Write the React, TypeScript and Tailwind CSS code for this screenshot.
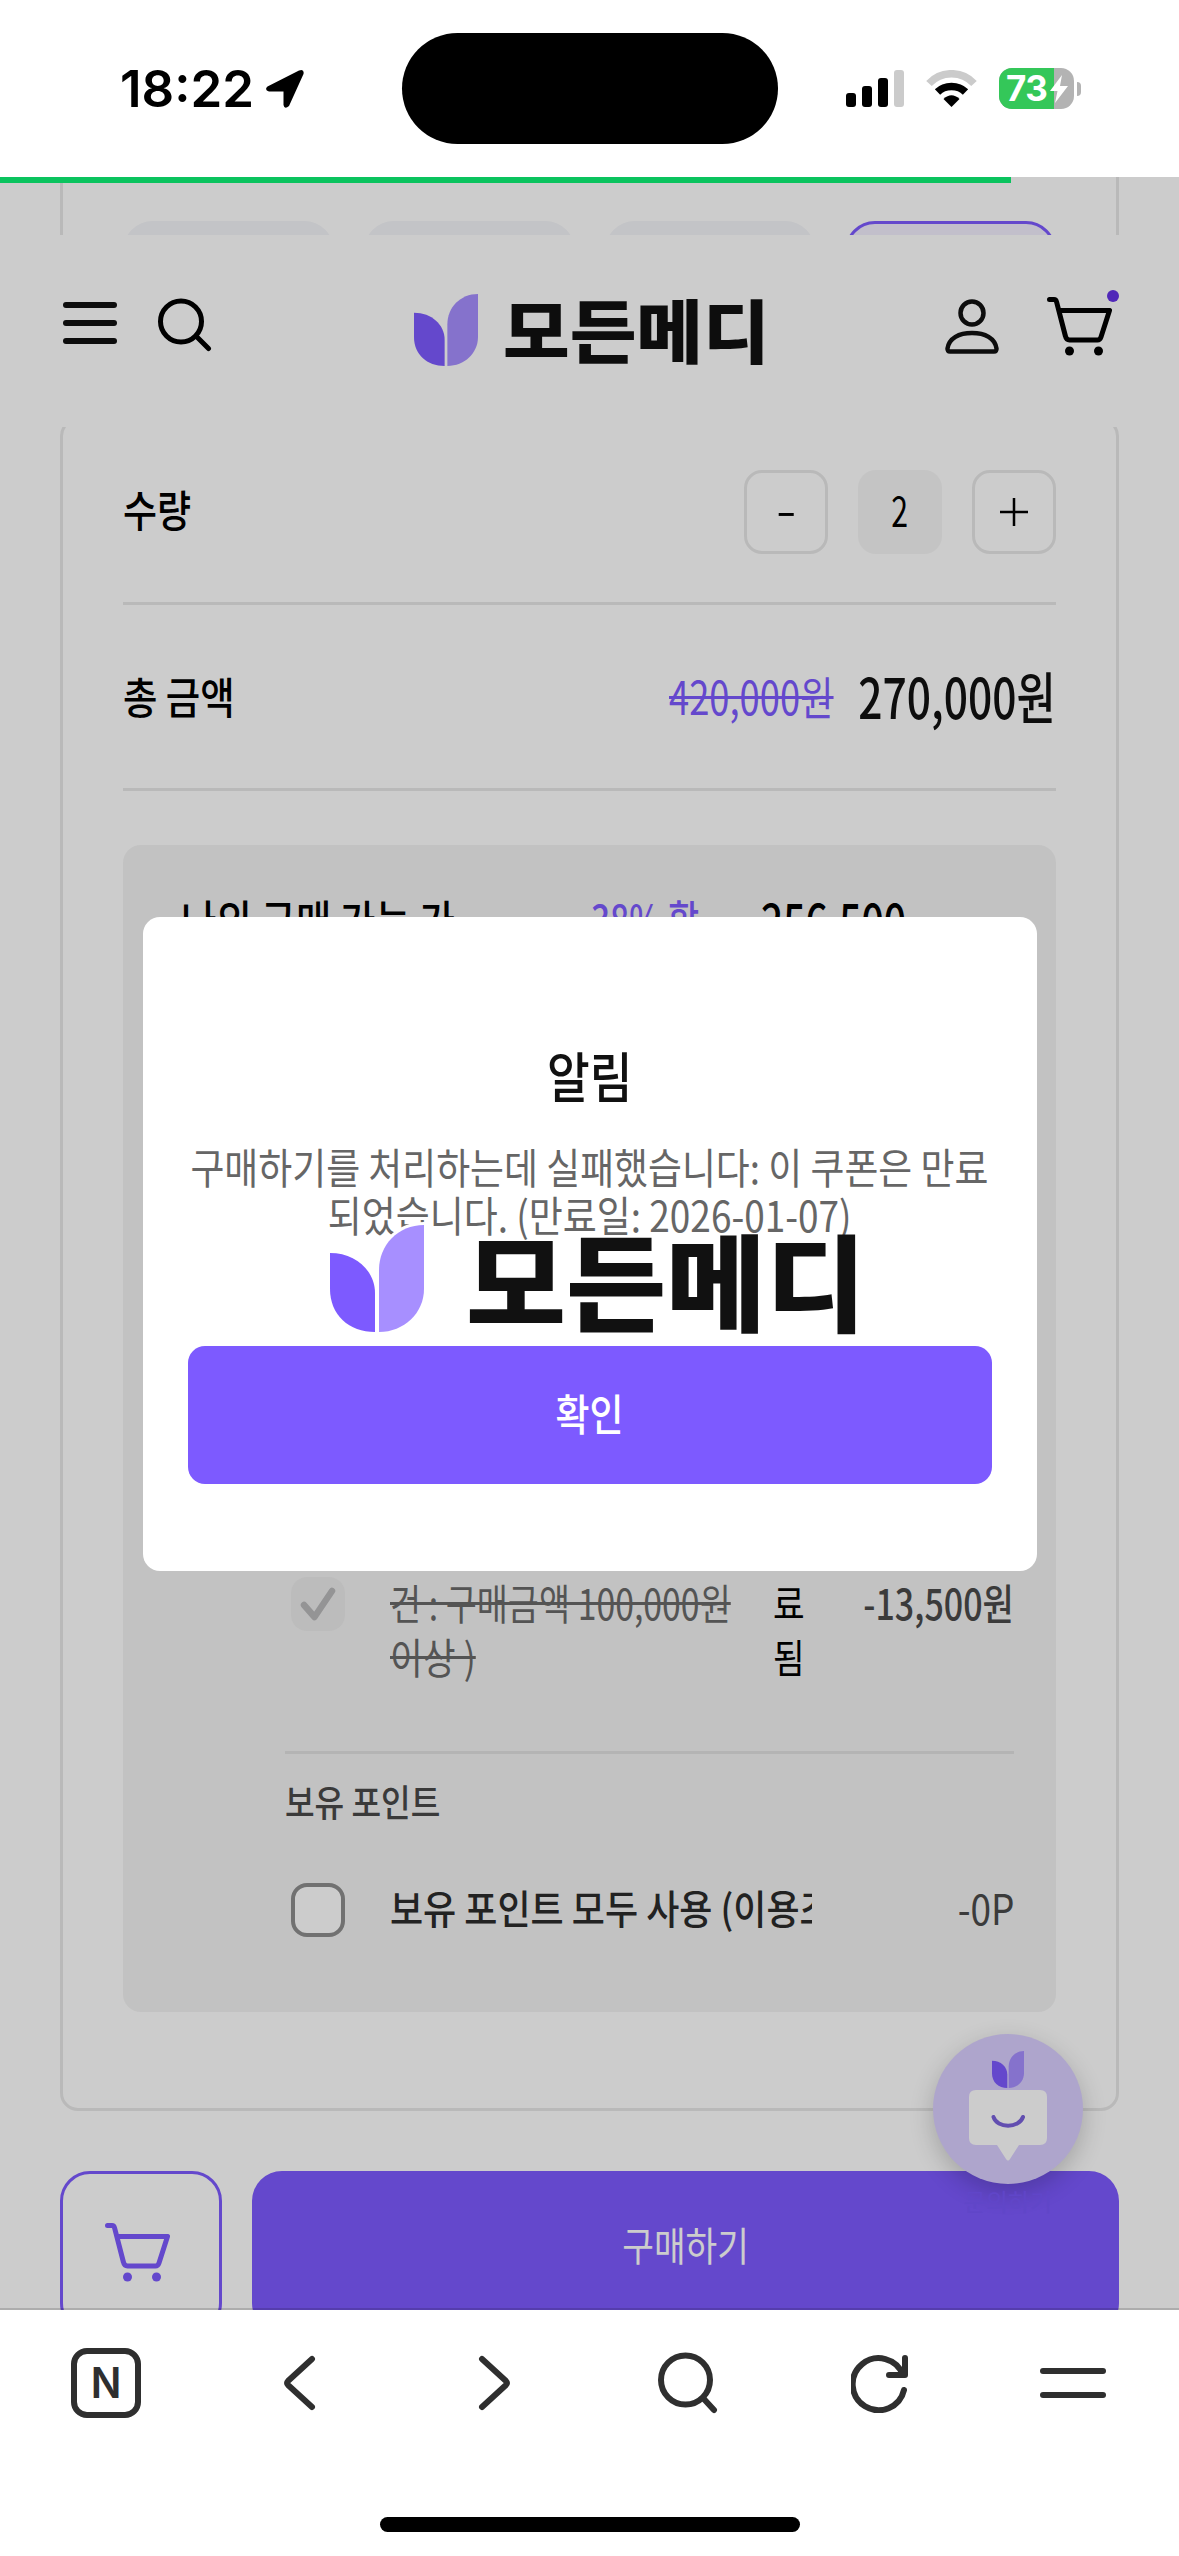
import type { ReactNode } from 'react'
import clsx from 'clsx'

const FONT = 'font-["Noto_Sans_CJK_KR","Noto_Sans",sans-serif]'

/**
 * 가로 폭을 좁힌 한 줄 텍스트
 */
function Condensed({ className, children }: { className?: string; children: ReactNode }) {
  return <span className={clsx('inline-block align-top whitespace-nowrap', className)}>{children}</span>
}

/**
 * 새싹 모양 심볼
 */
function Leaf({ className, outlined = false }: { className?: string; outlined?: boolean }) {
  return (
    <svg viewBox="0 0 94 107" className={clsx('overflow-visible', className)} preserveAspectRatio="none">
      {outlined && (
        <path d="M49 107V45C49 20 68 0 94 0V64C94 88 74 107 49 107Z" fill="none" stroke="#fff" strokeWidth="6" />
      )}
      <path d="M0 28C26 28 45 46 45 68V107C19 107 0 90 0 64Z" fill="#7d5aff" />
      <path d="M49 107V45C49 20 68 0 94 0V64C94 88 74 107 49 107Z" fill="#a78fff" />
    </svg>
  )
}

function CartIcon({ className }: { className?: string }) {
  return (
    <svg
      viewBox="0 0 66 60"
      className={className}
      fill="none"
      stroke="currentColor"
      strokeWidth="5"
      strokeLinecap="round"
      strokeLinejoin="round"
    >
      <path d="M2.5 3.5H7Q9 3.5 9.6 6L18.4 40Q19.3 44 22.5 44H50.5Q53 44 54 41L62.5 14.5H12.5" />
      <circle cx="22.5" cy="55" r="4.5" fill="currentColor" stroke="none" />
      <circle cx="51.5" cy="55" r="4.5" fill="currentColor" stroke="none" />
    </svg>
  )
}

/**
 * 아이폰 상태바
 */
function StatusBar() {
  return (
    <div className="relative flex h-[177px] shrink-0 items-center bg-white">
      <span className="ml-[120px] w-[145px] font-[Inter] text-[51px] leading-none font-semibold text-black">
        18:22
      </span>
      <svg viewBox="0 0 40 40" className="size-10">
        <path
          d="M2.5 17.5L34 1.5Q39.500 -0.500 38.500 5L24 37Q19.500 41 18.500 36V22.500H4Q-1 21 2.500 17.500Z"
          fill="#000"
        />
      </svg>
      <div className="absolute top-[33px] left-[402px] h-[111px] w-[376px] rounded-full bg-black" />
      <div className="ml-auto flex items-center pr-[98px]">
        <div className="mr-[22px] flex h-[37px] items-end gap-[6px]">
          <div className="h-[14px] w-[10px] rounded-[3px] bg-black" />
          <div className="h-[21px] w-[10px] rounded-[3px] bg-black" />
          <div className="h-[29px] w-[10px] rounded-[3px] bg-black" />
          <div className="h-[37px] w-[10px] rounded-[3px] bg-[#cbcbcb]" />
        </div>
        <svg viewBox="0 0 51 37" className="mr-[22px] h-[37px] w-[51px]" fill="none" strokeWidth="7.500">
          <path d="M3 13.500Q12 3.700 25.500 3.700T48 13.500" stroke="#cbcbcb" />
          <path d="M11.500 22Q17 16.500 25.500 16.500T39.500 22" stroke="#000" />
          <path d="M17.500 29Q25.500 21.500 33.500 29L25.500 37Z" fill="#000" />
        </svg>
        <div className="relative flex h-[41px] w-[75px] items-center overflow-hidden rounded-[13px] bg-[#b3b3b3]">
          <div className="absolute inset-y-0 left-0 w-[55px] bg-[#34c759]" />
          <span className="relative ml-[7px] w-[44px] font-[Inter] text-[35px] leading-none font-bold tracking-[-0.5px] text-white">
            73
          </span>
          <svg viewBox="0 0 18 28" className="relative h-[28px] w-[18px]">
            <path d="M12 0L0 16H7.500L5 28L18 11H10Z" fill="#fff" />
          </svg>
        </div>
        <div className="ml-[3px] h-[14px] w-[4px] rounded-r-full bg-[#b3b3b3]" />
      </div>
    </div>
  )
}

/**
 * 상단 헤더
 */
function Header() {
  return (
    <header className="flex h-[192px] shrink-0 items-start bg-white px-[60px]">
      <div className="ml-[3px] flex pt-[63px]">
        <div className="mt-[4px] flex w-[54px] flex-col gap-[12px]">
          <div className="h-[6px] rounded-sm bg-[#111]" />
          <div className="h-[6px] rounded-sm bg-[#111]" />
          <div className="h-[6px] rounded-sm bg-[#111]" />
        </div>
        <svg
          viewBox="0 0 54 54"
          className="ml-[41px] size-[54px]"
          fill="none"
          stroke="#000"
          strokeWidth="5"
          strokeLinecap="round"
        >
          <ellipse cx="23" cy="23.500" rx="20.500" ry="20.500" />
          <path d="M38 38L50.500 50.500" />
        </svg>
      </div>
      <div className="ml-[202px] flex pt-[59px]">
        <Leaf className="h-[72px] w-[64px]" />
        <span className="-mt-[4px] ml-[25px] w-[262px] origin-left scale-x-[1.05] text-[69px] leading-[76px] font-black whitespace-nowrap text-[#111]">
          모든메디
        </span>
      </div>
      <div className="ml-auto flex pt-[61px]">
        <svg
          viewBox="0 0 54 56"
          className="mt-[3px] h-[56px] w-[54px]"
          fill="none"
          stroke="#111"
          strokeWidth="4.500"
          strokeLinejoin="round"
        >
          <circle cx="27" cy="14" r="11.500" />
          <path d="M5 52.500Q2.300 52.500 2.500 49.500C4 39 14 34 27 34S50 39 51.500 49.500Q51.700 52.500 49 52.500Z" />
        </svg>
        <div className="relative ml-[48px] pr-[6px]">
          <CartIcon className="h-[60px] w-[66px]" />
          <div className="absolute -top-[6px] right-0 size-[12px] rounded-full bg-[#6533e7]" />
        </div>
      </div>
    </header>
  )
}

/**
 * 수량 선택
 */
function Quantity() {
  return (
    <div className="flex h-[181px] items-center justify-between">
      <Condensed className="origin-left scale-x-[0.86] pb-[6px] text-[43px] font-medium">수량</Condensed>
      <div className="flex gap-[30px] text-[42px]">
        <button className="flex size-[84px] items-center justify-center rounded-[18px] border-[3px] border-[#e8e8e8] pb-[8px]">
          <Condensed className="scale-x-[1.4]">-</Condensed>
        </button>
        <div className="flex size-[84px] items-center justify-center rounded-[18px] bg-[#f6f6f6] pb-[7px]">
          <Condensed className="scale-x-[0.72]">2</Condensed>
        </div>
        <button className="flex size-[84px] items-center justify-center rounded-[18px] border-[3px] border-[#e8e8e8]">
          <svg viewBox="0 0 28 28" className="size-7" stroke="#000" strokeWidth="2.500">
            <path d="M14 0V28M0 14H28" />
          </svg>
        </button>
      </div>
    </div>
  )
}

function TotalPrice() {
  return (
    <div className="flex h-[189px] items-center border-y-[3px] border-[#e8e8e8] pb-[3px]">
      <Condensed className="origin-left scale-x-[0.87] text-[43px] font-medium">총 금액</Condensed>
      <div className="ml-auto flex w-[387px] items-center">
        <div className="w-[187px]">
          <Condensed className="origin-left scale-x-[0.79] text-[46px] text-[#7d5aff] line-through decoration-3">
            420,000원
          </Condensed>
        </div>
        <div className="flex w-[200px] justify-end">
          <Condensed className="origin-right scale-x-[0.76] text-[56px] font-medium text-[#111]">270,000원</Condensed>
        </div>
      </div>
    </div>
  )
}

/**
 * 쿠폰 / 포인트 할인 패널
 */
function DiscountPanel() {
  return (
    <div className="mt-[54px] h-[1167px] rounded-[18px] bg-[#f3f3f3] pr-[42px] pl-[162px]">
      <div className="-ml-[104px] flex h-[732px] items-start pt-[43px]">
        <div className="w-[410px]">
          <Condensed className="origin-left scale-x-[0.895] text-[43px] leading-[60px] font-medium">
            나의 구매 가능 가
          </Condensed>
        </div>
        <div className="w-[170px]">
          <Condensed className="origin-left scale-x-[0.78] text-[43px] leading-[60px] font-medium text-[#7d5aff]">
            38% 할
          </Condensed>
        </div>
        <Condensed className="origin-left scale-x-[0.78] text-[50px] leading-[60px] font-medium">256,500</Condensed>
      </div>

      {/* 만료된 쿠폰 */}
      <div className="flex h-[174px] text-[42px] leading-[54px]">
        <div className="ml-[6px] flex size-[54px] items-center justify-center rounded-[16px] bg-[#ececec]">
          <svg
            viewBox="0 0 36 34"
            className="h-[34px] w-[36px]"
            fill="none"
            stroke="#b9b9bb"
            strokeWidth="6.500"
            strokeLinecap="round"
            strokeLinejoin="round"
          >
            <path d="M4 18L14.500 30L32 4" />
          </svg>
        </div>
        <div className="-mt-[2px] ml-[45px] flex w-[383px] flex-col items-start text-[#6a6a6a]">
          <Condensed className="origin-left scale-x-[0.805] line-through decoration-3">
            건 : 구매금액 100,000원
          </Condensed>
          <Condensed className="origin-left scale-x-[0.85] line-through decoration-3">이상 )</Condensed>
        </div>
        <div className="-mt-[2px] flex w-[34px] flex-col text-[40px]">
          <Condensed className="origin-left scale-x-[0.86]">료</Condensed>
          <Condensed className="origin-left scale-x-[0.86]">됨</Condensed>
        </div>
        <div className="-mt-[2px] flex flex-1 justify-end text-[#4a4a4a]">
          <Condensed className="origin-right scale-x-[0.81] font-medium">-13,500원</Condensed>
        </div>
      </div>

      <div className="border-t-[3px] border-[#e2e2e2] pt-[20px] leading-[54px]">
        <Condensed className="origin-left scale-x-[0.87] text-[37px] font-medium text-[#494949]">보유 포인트</Condensed>
      </div>
      <div className="mt-[55px] flex h-[54px] leading-[54px]">
        <div className="ml-[6px] size-[54px] rounded-[16px] border-[4px] border-[#8e8e8e] bg-white" />
        <div className="-mt-[3px] ml-[45px] w-[422px] overflow-hidden">
          <Condensed className="origin-left scale-x-[0.9] text-[40px] font-medium text-[#2b2b2b]">
            보유 포인트 모두 사용 (이용조
          </Condensed>
        </div>
        <div className="-mt-[3px] flex flex-1 justify-end">
          <Condensed className="origin-right scale-x-[0.88] text-[42px] text-[#4a4a4a]">-0P</Condensed>
        </div>
      </div>
    </div>
  )
}

/**
 * 채팅 상담 버튼
 */
function ChatButton() {
  return (
    <div className="absolute top-[1857px] left-[933px] flex w-[150px] flex-col items-center">
      <div className="flex size-[150px] flex-col items-center rounded-full bg-[#dacfff] pt-[17px] shadow-[0_8px_24px_rgba(0,0,0,0.2)]">
        <Leaf className="h-[37px] w-[32px]" />
        <svg viewBox="0 0 78 72" className="mt-[2px] h-[72px] w-[78px]">
          <path
            d="M7 0H71Q78 0 78 7V48Q78 55 71 55H50L41 69Q39 72 37 69L28 55H7Q0 55 0 48V7Q0 0 7 0Z"
            fill="#fff"
          />
          <path d="M24.500 27C28 38.500 50 38.500 54 27" fill="none" stroke="#7b62dc" strokeWidth="4" strokeLinecap="round" />
        </svg>
      </div>
      <span className="mt-[1px] text-[24px] leading-[32px] whitespace-nowrap text-[#7958fa]">문의하기</span>
    </div>
  )
}

/**
 * 알림 모달
 */
function AlertModal() {
  return (
    <div className="absolute inset-0 flex items-center justify-center bg-black/20">
      <div className="flex h-[654px] w-[894px] flex-col items-center rounded-[17px] bg-white px-[45px] pt-[118px]">
        <Condensed className="scale-x-[0.86] text-[54px] leading-[80px] font-medium text-[#111]">알림</Condensed>
        <div className="mt-[27px] flex flex-col items-center text-[42px] leading-[48px] text-[#666]">
          <Condensed className="scale-x-[0.878]">구매하기를 처리하는데 실패했습니다: 이 쿠폰은 만료</Condensed>
          <Condensed className="scale-x-[0.88]">되었습니다. (만료일: 2026-01-07)</Condensed>
        </div>
        <div className="relative -mt-[13px] flex w-[520px]">
          <Leaf className="h-[107px] w-[94px] shrink-0" outlined />
          <span className="-mt-[3px] ml-[42px] origin-left scale-x-[1.035] text-[105px] leading-[110px] font-black whitespace-nowrap text-[#111]">
            모든메디
          </span>
        </div>
        <button className="mt-[14px] h-[138px] w-[804px] shrink-0 rounded-[17px] bg-[#7d5aff] pb-[4px] text-[43px] font-medium text-white">
          <Condensed className="scale-x-[0.86]">확인</Condensed>
        </button>
      </div>
    </div>
  )
}

/**
 * 브라우저 하단 툴바
 */
function BrowserBar() {
  return (
    <nav className="flex h-[246px] shrink-0 flex-col items-center bg-white text-[#2f2f2f]">
      <div className="flex h-[145px] w-full items-center pl-[71px]">
        <div className="flex size-[70px] items-center justify-center rounded-[16px] border-[6px] border-[#2f2f2f]">
          <Condensed className="scale-x-[0.96] font-[Inter] text-[42px] leading-none font-semibold">N</Condensed>
        </div>
        <svg viewBox="0 0 34 56" className="ml-[141px] h-[56px] w-[34px]" fill="none" stroke="currentColor" strokeWidth="6" strokeLinecap="round" strokeLinejoin="round">
          <path d="M30 4L6 26Q4 28 6 30L30 52" />
        </svg>
        <svg viewBox="0 0 34 56" className="ml-[162px] h-[56px] w-[34px]" fill="none" stroke="currentColor" strokeWidth="6" strokeLinecap="round" strokeLinejoin="round">
          <path d="M4 4L28 26Q30 28 28 30L4 52" />
        </svg>
        <svg viewBox="0 0 60 62" className="ml-[146px] h-[62px] w-[60px]" fill="none" stroke="currentColor" strokeWidth="6" strokeLinecap="round">
          <circle cx="27.500" cy="28" r="24.500" />
          <path d="M45 46L56 58" />
        </svg>
        <svg viewBox="0 0 58 60" className="ml-[133px] h-[60px] w-[58px]" fill="none" stroke="currentColor" strokeWidth="6" strokeLinecap="round" strokeLinejoin="round">
          <path d="M53 37A26 26 0 1 1 52 22" />
          <path d="M54 5V22H38" />
        </svg>
        <div className="ml-[131px] flex w-[66px] flex-col gap-[18px]">
          <div className="h-[6px] rounded-full bg-[#2f2f2f]" />
          <div className="h-[6px] rounded-full bg-[#2f2f2f]" />
        </div>
      </div>
      <div className="mt-[62px] h-[15px] w-[420px] rounded-full bg-black" />
    </nav>
  )
}

export default function App() {
  return (
    <div className={clsx('flex h-[2556px] w-[1179px] flex-col overflow-hidden bg-white text-black', FONT)}>
      <StatusBar />

      <main className="relative flex h-[2133px] shrink-0 flex-col overflow-hidden">
        {/* 헤더 위로 살짝 보이는 옵션 칩 */}
        <div className="h-[58px] shrink-0 overflow-hidden px-[60px]">
          <div className="grid h-[120px] grid-cols-4 gap-[30px] border-x-[3px] border-[#e8e8e8] px-[60px] pt-[44px]">
            <div className="rounded-[30px] bg-[#f4f5f9]" />
            <div className="rounded-[30px] bg-[#f4f5f9]" />
            <div className="rounded-[30px] bg-[#f4f5f9]" />
            <div className="rounded-[30px] border-[3px] border-[#7d5aff] bg-[#f3effe]" />
          </div>
        </div>

        <Header />

        <div className="flex-1 overflow-hidden px-[60px]">
          <div className="-mt-[9px] h-[1693px] rounded-[18px] border-[3px] border-[#e8e8e8] px-[60px]">
            <Quantity />
            <TotalPrice />
            <DiscountPanel />
          </div>
          <div className="mt-[60px] flex gap-[30px]">
            <div className="flex h-[162px] w-[162px] justify-center rounded-[30px] border-[3px] border-[#7d5aff] pt-[48px] pr-[6px] text-[#7d5aff]">
              <CartIcon className="h-[60px] w-[66px]" />
            </div>
            <button className="h-[162px] flex-1 rounded-[30px] bg-[#7d5aff] pb-[16px] text-[40px] text-white">
              <Condensed className="scale-x-[0.86]">구매하기</Condensed>
            </button>
          </div>
        </div>

        <ChatButton />
        <AlertModal />
        <div className="absolute inset-x-0 bottom-0 h-[2px] bg-black/15" />
        <div className="absolute top-0 left-0 h-[6px] w-[1011px] bg-[#0ac35e]" />
      </main>

      <BrowserBar />
    </div>
  )
}
